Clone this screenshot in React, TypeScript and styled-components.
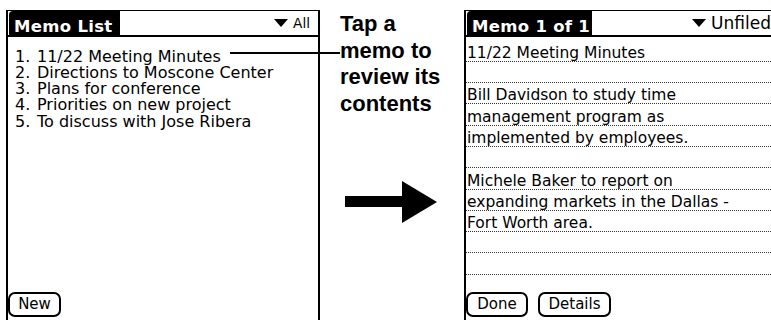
import React from "react";
import styled, { createGlobalStyle } from "styled-components";

const Global = createGlobalStyle`
  html, body { margin: 0; padding: 0; background: #fff; }
  body { font-family: "DejaVu Sans", "Liberation Sans", sans-serif; color: #000; }
  * { box-sizing: border-box; }
`;

const Page = styled.div`
  position: relative;
  width: 771px;
  height: 320px;
  overflow: hidden;
  display: flex;
  align-items: stretch;
  padding-top: 10px;
`;

const Screen = styled.section<{ $width: number; $offset: number; $rightBorder?: boolean }>`
  flex: none;
  width: ${(p) => p.$width}px;
  margin-left: ${(p) => p.$offset}px;
  border-left: 2px solid #000;
  border-right: ${(p) => (p.$rightBorder ? "2px solid #000" : "none")};
  display: flex;
  flex-direction: column;
`;

const Header = styled.header`
  flex: none;
  height: 27px;
  display: flex;
  align-items: stretch;
  border-top: 1px solid #000;
  border-bottom: 2px solid #000;
`;

const TitleTab = styled.div<{ $width: number }>`
  width: ${(p) => p.$width}px;
  margin-left: 1px;
  background: #000;
  color: #fff;
  font-weight: bold;
  font-size: 16.5px;
  line-height: 19px;
  padding: 6px 0 0 5px;
  border-top-left-radius: 4px;
  white-space: nowrap;
  letter-spacing: 0.3px;
`;

const Picker = styled.div<{ $size: number; $pad: number }>`
  margin-left: auto;
  display: flex;
  align-items: center;
  gap: 5px;
  padding-right: ${(p) => p.$pad}px;
  font-size: ${(p) => p.$size}px;
  white-space: nowrap;
`;

const Body = styled.div`
  flex: 1;
  min-height: 0;
`;

const List = styled.ol`
  list-style: none;
  margin: 0;
  padding: 11.5px 0 0 7px;
`;

const ListItem = styled.li`
  display: flex;
  height: 16.25px;
  font-size: 16px;
  line-height: 16px;
  white-space: nowrap;
`;

const Num = styled.span`
  flex: none;
  width: 22px;
`;

const Notes = styled.div`
  padding-top: 3.5px;
`;

const NoteLine = styled.div`
  height: 21.3px;
  display: flex;
  align-items: flex-end;
  padding-left: 1px;
  border-bottom: 1px dotted #333;
  font-size: 15.5px;
  line-height: 15px;
  white-space: nowrap;
`;

const Footer = styled.footer`
  flex: none;
  display: flex;
  gap: 10px;
  padding: 0 0 3px 0;
`;

const Button = styled.button<{ $width: number }>`
  width: ${(p) => p.$width}px;
  height: 25px;
  padding: 0;
  border: 2px solid #000;
  border-radius: 7px;
  background: #fff;
  color: #000;
  font-family: "DejaVu Sans", sans-serif;
  font-size: 15px;
  line-height: 19px;
`;

const Middle = styled.div`
  flex: none;
  width: 144px;
  display: flex;
  flex-direction: column;
`;

const Caption = styled.p`
  margin: 1px 0 0 20px;
  font-family: "Liberation Sans", Arial, sans-serif;
  font-weight: bold;
  font-size: 22px;
  line-height: 26.7px;
`;

const ArrowBox = styled.div`
  margin: 63px 0 0 25px;
  line-height: 0;
`;

const Connector = styled.div`
  position: absolute;
  left: 230px;
  top: 52px;
  width: 110px;
  height: 2px;
  background: #000;
`;

const Triangle = () => (
  <svg width="14" height="8" viewBox="0 0 14 8" aria-hidden="true">
    <path d="M0 0 H14 L7 8 Z" fill="#000" />
  </svg>
);

const items = [
  "11/22 Meeting Minutes",
  "Directions to Moscone Center",
  "Plans for conference",
  "Priorities on new project",
  "To discuss with Jose Ribera",
];

const notes = [
  "11/22 Meeting Minutes",
  "",
  "Bill Davidson to study time",
  "management program as",
  "implemented by employees.",
  "",
  "Michele Baker to report on",
  "expanding markets in the Dallas -",
  "Fort Worth area.",
  "",
  "",
];

export default function App() {
  return (
    <>
      <Global />
      <Page>
        <Screen $width={314} $offset={6} $rightBorder>
          <Header>
            <TitleTab $width={111}>Memo List</TitleTab>
            <Picker $size={13.7} $pad={8}>
              <Triangle />
              <span>All</span>
            </Picker>
          </Header>
          <Body>
            <List>
              {items.map((t, i) => (
                <ListItem key={t}>
                  <Num>{i + 1}.</Num>
                  <span>{t}</span>
                </ListItem>
              ))}
            </List>
          </Body>
          <Footer>
            <Button $width={53}>New</Button>
          </Footer>
        </Screen>
        <Middle>
          <Caption>
            Tap a
            <br />
            memo to
            <br />
            review its
            <br />
            contents
          </Caption>
          <ArrowBox>
            <svg width="92" height="42" viewBox="0 0 92 42" aria-hidden="true">
              <path d="M0 15 H57 V0 L92 21 L57 42 V26 H0 Z" fill="#000" />
            </svg>
          </ArrowBox>
        </Middle>
        <Screen $width={307} $offset={0}>
          <Header>
            <TitleTab $width={125}>Memo 1 of 1</TitleTab>
            <Picker $size={17} $pad={0}>
              <Triangle />
              <span>Unfiled</span>
            </Picker>
          </Header>
          <Body>
            <Notes>
              {notes.map((t, i) => (
                <NoteLine key={i}>{t}</NoteLine>
              ))}
            </Notes>
          </Body>
          <Footer>
            <Button $width={62}>Done</Button>
            <Button $width={73}>Details</Button>
          </Footer>
        </Screen>
        <Connector />
      </Page>
    </>
  );
}
